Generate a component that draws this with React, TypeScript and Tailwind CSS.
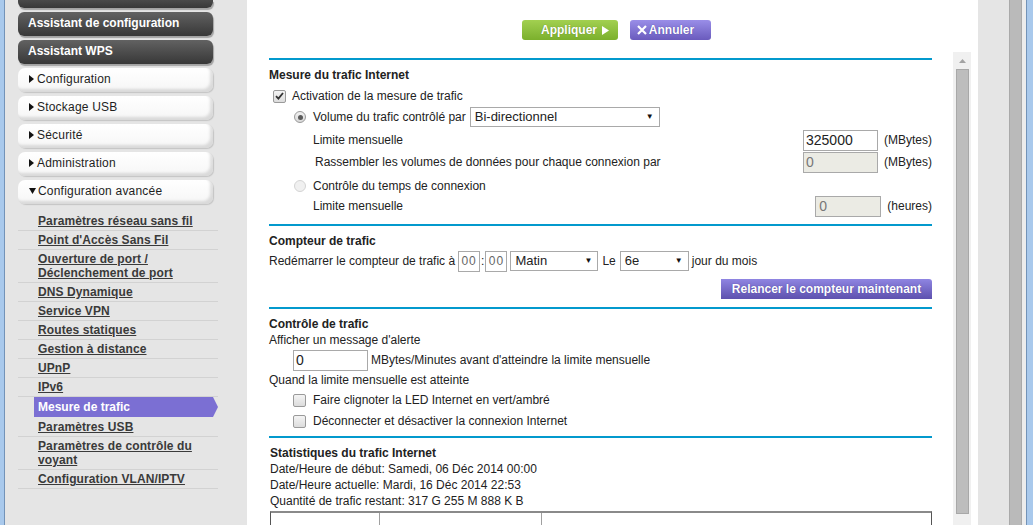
import React from "react";

const subLinks: { label: string[]; active?: boolean }[] = [
  { label: ["Paramètres réseau sans fil"] },
  { label: ["Point d'Accès Sans Fil"] },
  { label: ["Ouverture de port /", "Déclenchement de port"] },
  { label: ["DNS Dynamique"] },
  { label: ["Service VPN"] },
  { label: ["Routes statiques"] },
  { label: ["Gestion à distance"] },
  { label: ["UPnP"] },
  { label: ["IPv6"] },
  { label: ["Mesure de trafic"], active: true },
  { label: ["Paramètres USB"] },
  { label: ["Paramètres de contrôle du", "voyant"] },
  { label: ["Configuration VLAN/IPTV"] },
];

const menuButtons = ["Configuration", "Stockage USB", "Sécurité", "Administration"];

const DarkButton: React.FC<{ label: string }> = ({ label }) => (
  <div className="mt-[4px] flex h-[24px] w-[195px] items-center rounded-[6px] bg-linear-to-b from-[#626262] to-[#383838] pb-[2px] pl-[10px] text-[12px] font-bold text-white shadow-[1px_2px_1px_#a3a3a3]">
    {label}
  </div>
);

const MenuButton: React.FC<{ label: string; open?: boolean }> = ({ label, open }) => (
  <div className="mb-[4px] flex h-[24px] w-[195px] items-center rounded-[7px] bg-linear-to-b from-white to-[#f6f6f6] pb-[2px] pl-[11px] text-[12px] text-[#1e1e1e] shadow-[inset_-3px_-3px_3px_rgba(0,0,0,0.12),1px_1px_1px_#c4c4c4]">
    {open ? (
      <svg width="7" height="6" viewBox="0 0 7 6" className="mr-[2px]">
        <polygon points="0,0 7,0 3.5,6" fill="#111" />
      </svg>
    ) : (
      <svg width="5" height="8" viewBox="0 0 5 8" className="mr-[3px]">
        <polygon points="0,0 5,4 0,8" fill="#111" />
      </svg>
    )}
    <span className="tracking-[0.2px]">{label}</span>
  </div>
);

const Checkbox: React.FC<{ checked?: boolean }> = ({ checked }) => (
  <span className="flex h-[13px] w-[13px] shrink-0 items-center justify-center rounded-[2px] border border-[#9a9a9a] bg-linear-to-b from-[#f4f4f4] to-[#dcdcdc]">
    {checked && (
      <svg width="9" height="8" viewBox="0 0 9 8">
        <path d="M1 4.2 L3.4 6.6 L8 1" stroke="#333" strokeWidth="1.8" fill="none" />
      </svg>
    )}
  </span>
);

const Radio: React.FC<{ checked?: boolean; disabled?: boolean }> = ({ checked, disabled }) => (
  <span
    className={`flex h-[12px] w-[12px] shrink-0 items-center justify-center rounded-full border ${
      disabled ? "border-[#d4d4d4] bg-[#f0f0f0]" : "border-[#9a9a9a] bg-linear-to-b from-[#f2f2f2] to-[#d8d8d8]"
    }`}
  >
    {checked && <span className="h-[5px] w-[5px] rounded-full bg-[#5a5a5a]" />}
  </span>
);

const FakeSelect: React.FC<{ value: string; width: string }> = ({ value, width }) => (
  <div className={`flex h-[20px] items-center justify-between border border-[#a9a9a9] bg-white pl-[4px] pr-[5px] text-[13px] text-[#222] ${width}`}>
    <span>{value}</span>
    <span className="text-[8px] text-[#111]">▼</span>
  </div>
);

const Rule = () => <div className="h-[2px] w-full bg-[#0399cd]" />;

const Heading: React.FC<{ children: React.ReactNode }> = ({ children }) => (
  <div className="mt-[7px] h-[16px] text-[12px] leading-[16px] font-bold text-[#222]">{children}</div>
);

export default function App() {
  return (
    <div className="flex h-[525px] w-[1033px] overflow-hidden bg-white font-['Liberation_Sans',Arial,sans-serif] text-[12px] text-[#222]">
      {/* left frame edge */}
      <div className="w-[4px] shrink-0 bg-[#a9c9ec]" />
      <div className="w-[1px] shrink-0 bg-[#7393b8]" />

      {/* navigation */}
      <div className="w-[242px] shrink-0 bg-[#e5e5e5] pl-[13px]">
        <div className="h-[8px] w-[195px] rounded-b-[6px] bg-linear-to-b from-[#4a4a4a] to-[#383838] shadow-[1px_2px_1px_#a3a3a3]" />
        <DarkButton label="Assistant de configuration" />
        <DarkButton label="Assistant WPS" />
        <div className="mt-[4px] w-[200px]">
          {menuButtons.map((m) => (
            <MenuButton key={m} label={m} />
          ))}
          <MenuButton label="Configuration avancée" open />
        </div>
        <ul className="mt-[8px] w-[200px]">
          {subLinks.map((s) =>
            s.active ? (
              <li key={s.label[0]} className="mb-[1px] ml-[16px] flex h-[20px] items-center bg-[#7b6fd3] pl-[4px] text-[12px] font-bold text-white [clip-path:polygon(0_0,calc(100%-5px)_0,100%_50%,calc(100%-5px)_100%,0_100%)]">
                {s.label[0]}
              </li>
            ) : (
              <li key={s.label[0]} className="border-b border-[#d2d2d2] py-[2px] pl-[20px] text-[12px] leading-[14px] font-bold tracking-[0.1px] text-[#3a3a3a] underline">
                {s.label.map((l) => (
                  <div key={l}>{l}</div>
                ))}
              </li>
            )
          )}
        </ul>
      </div>

      {/* main panel */}
      <div className="flex w-[731px] shrink-0 flex-col bg-white">
        <div className="flex h-[52px] shrink-0 justify-center gap-[12px] pt-[20px] pl-[8px]">
          <button className="flex h-[20px] w-[96px] items-center justify-center gap-[5px] rounded-[3px] bg-linear-to-b from-[#a2d050] to-[#7bb02c] pl-[10px] text-[12px] font-bold text-white [text-shadow:0_0_1px_#5a7a20]">
            Appliquer
            <svg width="7" height="9" viewBox="0 0 7 9">
              <polygon points="0,0 7,4.5 0,9" fill="#fff" />
            </svg>
          </button>
          <button className="flex h-[20px] w-[81px] items-center justify-center gap-[2px] rounded-[3px] bg-linear-to-b from-[#9a8ee8] to-[#6a5bbd] pr-[10px] text-[12px] font-bold text-white [text-shadow:0_0_1px_#3e3290]">
            <svg width="10" height="10" viewBox="0 0 10 10">
              <path d="M1 1 L9 9 M9 1 L1 9" stroke="#fff" strokeWidth="2.2" />
            </svg>
            Annuler
          </button>
        </div>

        <div className="flex flex-1">
          {/* scrolling content */}
          <div className="w-[706px] shrink-0 pt-[6px] pr-[21px] pl-[22px]">
            <Rule />
            <Heading>Mesure du trafic Internet</Heading>
            <div className="mt-[3px] flex h-[20px] items-center pl-[4px]">
              <Checkbox checked />
              <span className="ml-[6px]">Activation de la mesure de trafic</span>
            </div>
            <div className="mt-[1px] flex h-[20px] items-center pl-[25px]">
              <Radio checked />
              <span className="mr-[4px] ml-[7px]">Volume du trafic contrôlé par</span>
              <FakeSelect value="Bi-directionnel" width="w-[190px]" />
            </div>
            <div className="mt-[2px] flex h-[22px] items-center justify-between pl-[44px]">
              <span>Limite mensuelle</span>
              <div className="flex items-center">
                <div className="flex h-[21px] w-[75px] items-center border border-[#a9a9a9] bg-white pl-[2px] text-[14px]">325000</div>
                <span className="ml-[6px]">(MBytes)</span>
              </div>
            </div>
            <div className="flex h-[22px] items-center justify-between pl-[46px]">
              <span>Rassembler les volumes de données pour chaque connexion par</span>
              <div className="flex items-center">
                <div className="flex h-[21px] w-[75px] items-center border border-[#a9a9a9] bg-[#ebebe4] pl-[2px] text-[14px] text-[#777]">0</div>
                <span className="ml-[6px]">(MBytes)</span>
              </div>
            </div>
            <div className="mt-[3px] flex h-[20px] items-center pl-[25px]">
              <Radio disabled />
              <span className="ml-[7px]">Contrôle du temps de connexion</span>
            </div>
            <div className="flex h-[20px] items-center justify-between pl-[44px]">
              <span>Limite mensuelle</span>
              <div className="flex items-center">
                <div className="flex h-[21px] w-[66px] items-center border border-[#a9a9a9] bg-[#ebebe4] pl-[3px] text-[14px] text-[#777]">0</div>
                <span className="ml-[6px]">(heures)</span>
              </div>
            </div>

            <div className="mt-[8px]">
              <Rule />
            </div>
            <Heading>Compteur de trafic</Heading>
            <div className="mt-[1px] flex h-[22px] items-center">
              <span className="mr-[3px]">Redémarrer le compteur de trafic à</span>
              <div className="flex h-[21px] w-[22px] items-center justify-center border border-[#a9a9a9] text-[12px] tracking-[1px] text-[#666]">00</div>
              <span className="mx-[1px]">:</span>
              <div className="flex h-[21px] w-[22px] items-center justify-center border border-[#a9a9a9] text-[12px] tracking-[1px] text-[#666]">00</div>
              <div className="ml-[3px]">
                <FakeSelect value="Matin" width="w-[88px]" />
              </div>
              <span className="mx-[4px]">Le</span>
              <FakeSelect value="6e" width="w-[69px]" />
              <span className="ml-[3px]">jour du mois</span>
            </div>
            <div className="mt-[7px] flex justify-end">
              <button className="h-[20px] w-[211px] rounded-tr-[3px] bg-linear-to-b from-[#8f85e2] to-[#5e51ae] text-[12px] font-bold text-white [text-shadow:0_0_1px_#3e3290]">
                Relancer le compteur maintenant
              </button>
            </div>

            <div className="mt-[8px]">
              <Rule />
            </div>
            <Heading>Contrôle de trafic</Heading>
            <div className="h-[16px] leading-[16px]">Afficher un message d'alerte</div>
            <div className="mt-[1px] flex h-[22px] items-center pl-[24px]">
              <div className="flex h-[21px] w-[75px] items-center border border-[#a9a9a9] bg-white pl-[2px] text-[14px]">0</div>
              <span className="ml-[3px]">MBytes/Minutes avant d'atteindre la limite mensuelle</span>
            </div>
            <div className="mt-[1px] h-[16px] leading-[16px]">Quand la limite mensuelle est atteinte</div>
            <div className="mt-[2px] flex h-[20px] items-center pl-[24px]">
              <Checkbox />
              <span className="ml-[7px]">Faire clignoter la LED Internet en vert/ambré</span>
            </div>
            <div className="mt-[1px] flex h-[20px] items-center pl-[24px]">
              <Checkbox />
              <span className="ml-[7px]">Déconnecter et désactiver la connexion Internet</span>
            </div>

            <div className="mt-[5px]">
              <Rule />
            </div>
            <div className="pl-[1px]">
              <Heading>Statistiques du trafic Internet</Heading>
              <div className="h-[16px] leading-[16px]">Date/Heure de début: Samedi, 06 Déc 2014 00:00</div>
              <div className="h-[16px] leading-[16px]">Date/Heure actuelle: Mardi, 16 Déc 2014 22:53</div>
              <div className="h-[16px] leading-[16px]">Quantité de trafic restant: 317 G 255 M 888 K B</div>
              <div className="mt-[2px] flex h-[40px] border-t-2 border-r border-l border-t-[#8a8a8a] border-r-[#555] border-l-[#555]">
                <div className="w-[109px] border-r border-[#a0a0a0]" />
                <div className="w-[162px] border-r border-[#a0a0a0]" />
                <div className="flex-1" />
              </div>
            </div>
          </div>

          {/* inner scrollbar */}
          <div className="flex w-[18px] shrink-0 flex-col items-start bg-[#f0f0f0] pl-[3px]">
            <div className="flex h-[17px] w-[13px] items-center justify-center">
              <svg width="7" height="4" viewBox="0 0 7 4">
                <polygon points="0,4 3.5,0 7,4" fill="#a3a3a3" />
              </svg>
            </div>
            <div className="h-[445px] w-[13px] border border-[#a8a8a8] bg-[#bdbdbd]" />
          </div>
          <div className="w-[7px] shrink-0" />
        </div>
      </div>

      {/* right frame */}
      <div className="w-[31px] shrink-0 bg-[#e5e5e5]" />
      <div className="w-[13px] shrink-0 border-x border-[#a9a9a9] bg-[#bababa]" />
      <div className="w-[4px] shrink-0 bg-[#ececec]" />
      <div className="w-[7px] shrink-0 border-l border-[#7393b8] bg-[#a9c9ec]" />
    </div>
  );
}
